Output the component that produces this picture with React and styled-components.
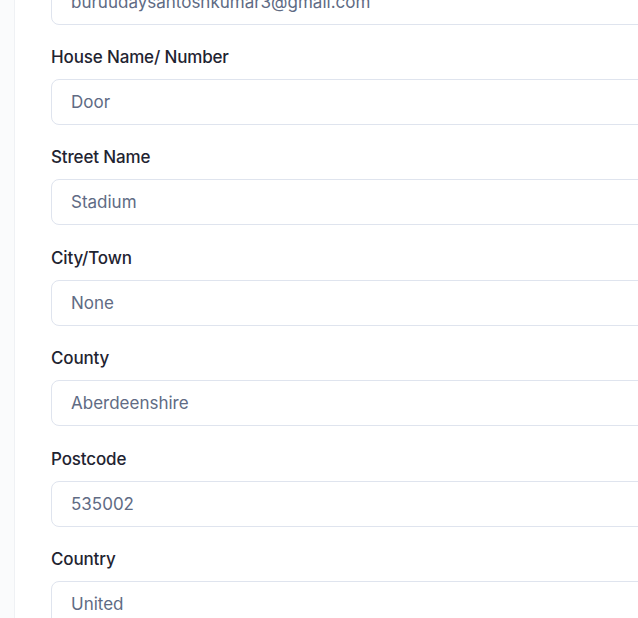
import React from 'react'
import styled, { createGlobalStyle } from 'styled-components'

const GlobalStyle = createGlobalStyle`
  body {
    margin: 0;
    font-family: Inter, "Noto Sans", sans-serif;
    background: #ffffff;
    overflow: hidden;
  }
`

const Page = styled.div`
  display: flex;
  height: 618px;
  overflow: hidden;
`

const SideStrip = styled.div`
  width: 14px;
  flex-shrink: 0;
  background: #fafbfc;
  border-right: 1px solid #eff1f4;
`

const Panel = styled.div`
  flex: 1;
  background: #ffffff;
  padding-left: 36px;
  overflow: hidden;
`

const Form = styled.div`
  display: flex;
  flex-direction: column;
  gap: 21.4px;
  width: 720px;
  margin-top: -21.4px;
`

const Field = styled.div`
  display: flex;
  flex-direction: column;
  gap: 11px;
`

const Label = styled.label`
  font-size: 17px;
  line-height: 22px;
  font-weight: 550;
  color: #1f2431;
  letter-spacing: -0.15px;
`

const Input = styled.input`
  box-sizing: border-box;
  height: 46px;
  width: 100%;
  border: 1px solid #dfe4ee;
  border-radius: 8px;
  padding: 0 19px;
  font-family: Inter, "Noto Sans", sans-serif;
  font-size: 17px;
  color: #606b84;
  background: #ffffff;
  outline: none;
`

const fields = [
  { label: null, value: 'buruudaysantoshkumar3@gmail.com' },
  { label: 'House Name/ Number', value: 'Door' },
  { label: 'Street Name', value: 'Stadium' },
  { label: 'City/Town', value: 'None' },
  { label: 'County', value: 'Aberdeenshire' },
  { label: 'Postcode', value: '535002' },
  { label: 'Country', value: 'United' },
]

export default function App() {
  return (
    <>
      <GlobalStyle />
      <Page>
        <SideStrip />
        <Panel>
          <Form>
            {fields.map((f, i) => (
              <Field key={i}>
                {f.label && <Label>{f.label}</Label>}
                <Input defaultValue={f.value} readOnly />
              </Field>
            ))}
          </Form>
        </Panel>
      </Page>
    </>
  )
}
